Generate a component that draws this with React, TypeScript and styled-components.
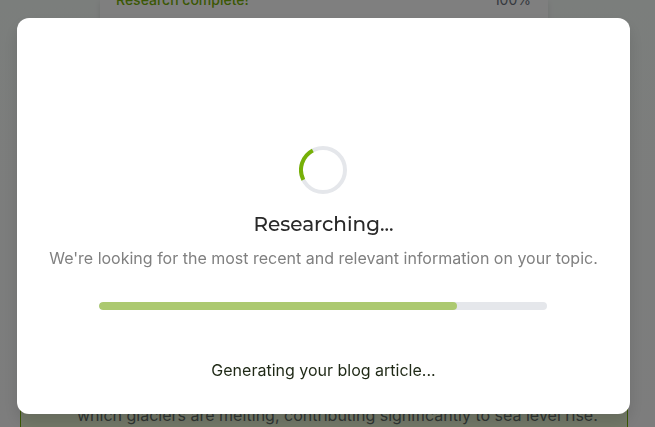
import React from "react";
import styled, { createGlobalStyle } from "styled-components";

const GlobalStyle = createGlobalStyle`
  *, *::before, *::after { box-sizing: border-box; }
  body { margin: 0; font-family: Inter, "Liberation Sans", sans-serif; font-size: 16px; line-height: 24px; }
  p, h2 { margin: 0; }
`;

const Page = styled.main`
  display: flex;
  flex-direction: column;
  height: 100vh;
  overflow: hidden;
  padding: 0 27px 0 20px;
  background: linear-gradient(180deg, #f7fcf9, #fafafa);
`;

const StatusCard = styled.section`
  display: flex;
  justify-content: space-between;
  align-items: flex-end;
  width: 100%;
  max-width: 448px;
  height: 40px;
  margin: 0 auto;
  padding: 0 17px 30px 16px;
  background: #ffffff;
  box-shadow: 0 2px 6px rgba(0, 0, 0, 0.1);
  font-size: 14px;
  line-height: 20px;
`;

const StatusLabel = styled.span`
  color: #76b007;
  font-weight: 500;
`;

const StatusValue = styled.span`
  color: #6b7280;
`;

const Results = styled.section`
  display: flex;
  flex: 1;
  flex-direction: column;
  justify-content: flex-end;
`;

const Finding = styled.article`
  height: 120px;
  padding: 95px 24px 0 56px;
  border: 1px solid #76b007;
  border-bottom: 0;
  background: #e6f2d2;
  color: #5f6b66;
  white-space: nowrap;
`;

const Backdrop = styled.div`
  position: fixed;
  inset: 0;
  display: flex;
  padding: 18px 25px 13px 17px;
  background: rgba(0, 0, 0, 0.5);
`;

const Dialog = styled.div`
  display: flex;
  flex: 1;
  flex-direction: column;
  align-items: center;
  justify-content: flex-end;
  padding: 0 25px 32px 24px;
  border-radius: 12px;
  background: #ffffff;
  box-shadow: 0 8px 16px rgba(0, 0, 0, 0.12);
  text-align: center;
`;

const Spinner = styled.svg`
  display: block;
  width: 48px;
  height: 48px;
`;

const Title = styled.h2`
  margin-top: 16px;
  padding-left: 1px;
  color: #292929;
  font-family: Montserrat, "Noto Sans", sans-serif;
  font-size: 20px;
  font-weight: 500;
  line-height: 28px;
`;

const Description = styled.p`
  margin-top: 8px;
  padding-left: 1px;
  color: #808080;
`;

const Track = styled.div`
  width: 100%;
  max-width: 448px;
  height: 8px;
  margin: 32px 0 48px;
  overflow: hidden;
  border-radius: 4px;
  background: #e5e7eb;
`;

const Fill = styled.div`
  height: 100%;
  border-radius: 4px;
  background: #acc970;
`;

const Step = styled.p`
  padding-left: 1px;
  color: #1f2916;
`;

export default function App() {
  const progress = 80;
  return (
    <>
      <GlobalStyle />
      <Page aria-hidden="true">
        <StatusCard>
          <StatusLabel>Research complete!</StatusLabel>
          <StatusValue>100%</StatusValue>
        </StatusCard>
        <Results>
          <Finding>which glaciers are melting, contributing significantly to sea level rise.</Finding>
        </Results>
      </Page>
      <Backdrop>
        <Dialog role="dialog" aria-modal="true" aria-labelledby="dialog-title">
          <Spinner viewBox="0 0 48 48" fill="none" strokeWidth="4" aria-hidden="true">
            <circle cx="24" cy="24" r="22" stroke="#e5e7eb" />
            <path d="M4.3 33.8A22 22 0 0 1 13.8 4.5" stroke="#76b007" />
          </Spinner>
          <Title id="dialog-title">Researching...</Title>
          <Description>We're looking for the most recent and relevant information on your topic.</Description>
          <Track role="progressbar" aria-label="Research progress" aria-valuenow={progress} aria-valuemin={0} aria-valuemax={100}>
            <Fill style={{ width: `${progress}%` }} />
          </Track>
          <Step>Generating your blog article...</Step>
        </Dialog>
      </Backdrop>
    </>
  );
}
